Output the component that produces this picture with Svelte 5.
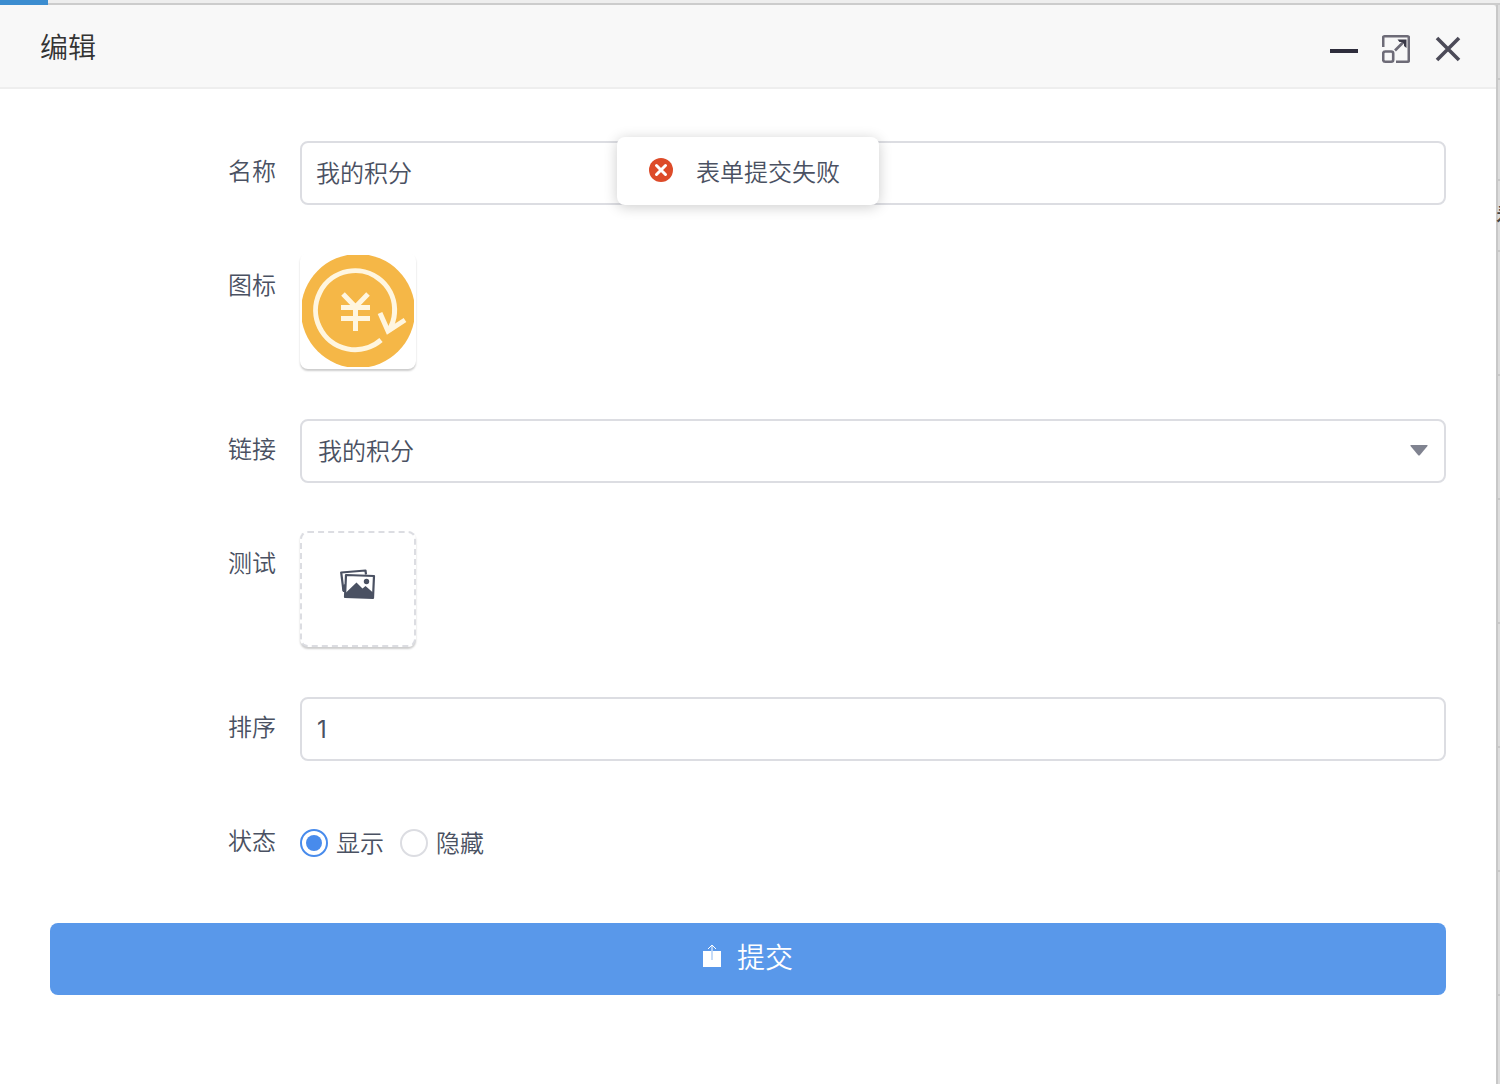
<script lang="ts">
	let name = '我的积分';
	let link = '我的积分';
	let sort = '1';
	let status = 'show';
	let message = '表单提交失败';

	const links = ['我的积分', '我的订单', '我的收藏'];

	// heights of the table rows that show next to the dialog
	const rows = [75, 101, 71, 124, 124, 124, 124, 124, 124];
</script>

<div class="page">
	<div class="tabs"><div class="tab"></div></div>
	<div class="main">
		<div class="dialog" role="dialog" aria-labelledby="title">
			<header>
				<h1 id="title">编辑</h1>
				<div class="tools">
					<button type="button" aria-label="最小化">
						<svg width="28" height="32" viewBox="0 0 28 32">
							<path d="M0 16h28v4H0z" fill="#2e2d3c" />
						</svg>
					</button>
					<button type="button" aria-label="最大化">
						<svg width="28" height="32" viewBox="0 0 28 32" fill="none" stroke="#6d6b77" stroke-width="2.600">
							<path d="M1.200 14V4.500q0-1.300 1.300-1.300h23q1.300 0 1.300 1.300v23q0 1.300-1.300 1.300H14" />
							<rect x="1.200" y="18.500" width="10" height="10.300" rx="2" />
							<path d="M13 17.500l9-9" />
							<path d="M15.500 6.500H24.500V15L22 13V10.500L20 9H17.500z" fill="#3a3947" stroke="none" />
						</svg>
					</button>
					<button type="button" aria-label="关闭">
						<svg width="28" height="32" viewBox="0 0 28 32" fill="none" stroke="#4c4b58" stroke-width="3.600">
							<path d="M3 5l22 22M25 5L3 27" />
						</svg>
					</button>
				</div>
			</header>

			<form on:submit|preventDefault>
				<div class="row">
					<label class="label" for="name">名称</label>
					<input class="control" id="name" type="text" bind:value={name} />
				</div>
				<div class="row">
					<span class="label">图标</span>
					<button class="thumb" type="button" aria-label="图标">
						<svg width="112" height="112" viewBox="0 0 112 112" fill="none">
							<circle cx="56" cy="56" r="57" fill="#f5b747" />
							<g stroke="#fff6e0" stroke-width="5">
								<path d="M79 85A39.500 39.500 0 1 1 92.500 58Q92 67 87 75" />
								<path d="M78 58l8 18 17-11" />
								<path d="M41 39l12.500 13L66 39M53.500 52v24M39 52.500h29M39 63.500h29" />
							</g>
						</svg>
					</button>
				</div>
				<div class="row">
					<label class="label" for="link">链接</label>
					<div class="select">
						<select class="control" id="link" bind:value={link}>
							{#each links as item}
								<option>{item}</option>
							{/each}
						</select>
						<svg class="arrow" width="18" height="11" viewBox="0 0 18 11">
							<path d="M1 0h16q1 0 .5 1L10 10q-1 1-2 0L.5 1Q0 0 1 0z" fill="#808390" />
						</svg>
					</div>
				</div>
				<div class="row">
					<span class="label">测试</span>
					<button class="thumb empty" type="button" aria-label="测试">
						<svg width="36" height="32" viewBox="0 0 36 32" fill="none" stroke="#4a5162" stroke-width="2.200" stroke-linejoin="round">
							<path d="M3.500 23L1.200 4.500l24.300-2 .5 4" />
							<path d="M2 18l3-2v8H3z" fill="#4a5162" stroke="none" />
							<path d="M6 7l28 1-1 22-28-1z" />
							<circle cx="26.500" cy="13.500" r="2.700" fill="#4a5162" stroke="none" />
							<path d="M5.500 25l11-10.500 6 6 3-2.500 8 7v5L6 29z" fill="#4a5162" stroke="none" />
						</svg>
					</button>
				</div>
				<div class="row">
					<label class="label" for="sort">排序</label>
					<input class="control number" id="sort" type="text" bind:value={sort} />
				</div>
				<div class="row" role="radiogroup" aria-labelledby="status">
					<span class="label" id="status">状态</span>
					<div class="radios">
						<label><input type="radio" name="status" value="show" bind:group={status} />显示</label>
						<label><input type="radio" name="status" value="hide" bind:group={status} />隐藏</label>
					</div>
				</div>
				<button class="submit" type="submit">
					<svg width="18" height="24" viewBox="0 0 18 24" fill="none">
						<path d="M0 7h18v16H0z" fill="#fff" />
						<path d="M9 7v9" stroke="#8ab7f1" />
						<path d="M9 7V1M5 5l4-4 4 4" stroke="#fff" />
					</svg>
					提交
				</button>
			</form>

			<div class="toast" role="alert">
				<svg width="24" height="24" viewBox="0 0 24 24">
					<circle cx="12" cy="12" r="12" fill="#dd4b29" />
					<path d="M7.500 7.500l9 9M16.500 7.500l-9 9" stroke="#fff" stroke-width="3" stroke-linecap="round" />
				</svg>
				{message}
			</div>
		</div>

		<div class="behind">
			{#each rows as height, i}
				<div class="cell" style="height: {height}px">{i === 2 ? '看' : ''}</div>
			{/each}
		</div>
	</div>
</div>

<style>
	:global(body) {
		margin: 0;
		background: #ddd;
	}

	.page,
	.page button,
	.page input,
	.page select {
		font-family: 'Noto Sans CJK SC', sans-serif;
		font-size: 24px;
		font-weight: 350;
		color: #4a5162;
	}

	.page {
		box-sizing: border-box;
		display: flex;
		flex-direction: column;
		min-height: 100vh;
	}

	.tabs {
		box-sizing: border-box;
		height: 5px;
		background: #eee;
		border-bottom: 2px solid #ccc;
	}

	.tab {
		width: 48px;
		height: 5px;
		background: #3c8dd0;
	}

	.main {
		flex: 1;
		display: flex;
	}

	.dialog {
		position: relative;
		flex: 1;
		background: #fff;
		border-radius: 0 4px 0 0;
		overflow: hidden;
	}

	header {
		display: flex;
		align-items: center;
		justify-content: space-between;
		height: 82px;
		padding: 0 34px 0 40px;
		background: #f8f8f8;
		border-bottom: 2px solid #eee;
	}

	h1 {
		margin: 0;
		font-size: 28px;
		line-height: 40px;
		font-weight: 350;
		color: #333;
	}

	.tools {
		display: flex;
		gap: 24px;
		padding-top: 6px;
	}

	.tools button {
		display: flex;
		padding: 0;
		border: 0;
		background: none;
	}

	form {
		padding: 52px 50px;
	}

	.row {
		display: flex;
		align-items: flex-start;
		margin-bottom: 50px;
	}

	.label {
		width: 226px;
		margin-right: 24px;
		line-height: 58px;
		text-align: right;
	}

	.control {
		box-sizing: border-box;
		flex: 1;
		width: 100%;
		height: 64px;
		padding: 0 14px 4px;
		background: #fff;
		border: 2px solid #dcdde2;
		border-radius: 8px;
		outline: none;
	}

	.page .number {
		padding: 0 15px;
		font-family: Inter, sans-serif;
		font-weight: 400;
	}

	.select {
		position: relative;
		flex: 1;
	}

	.select .control {
		display: block;
		padding: 0 16px 4px;
		appearance: none;
	}

	.arrow {
		position: absolute;
		top: 26px;
		right: 18px;
		pointer-events: none;
	}

	.thumb {
		box-sizing: border-box;
		display: flex;
		align-items: center;
		justify-content: center;
		width: 116px;
		height: 116px;
		margin-top: -2px;
		padding: 0;
		background: #fff;
		border: 2px solid transparent;
		border-radius: 8px;
		box-shadow: 0 2px 2px rgba(0, 0, 0, 0.2);
	}

	.empty {
		padding-bottom: 10px;
		border: 2px dashed #dcdde2;
	}

	.radios {
		display: flex;
		align-items: flex-start;
		gap: 16px;
		height: 64px;
		line-height: 62px;
	}

	.radios label {
		display: flex;
		align-items: center;
		gap: 8px;
	}

	.radios input {
		box-sizing: border-box;
		width: 28px;
		height: 28px;
		margin: 2px 0 0;
		border: 2px solid #dcdde2;
		border-radius: 50%;
		appearance: none;
	}

	.radios input:checked {
		border-color: #488bec;
		background: #488bec;
		background-clip: content-box;
		padding: 4px;
	}

	.page .submit {
		display: flex;
		align-items: center;
		justify-content: center;
		gap: 16px;
		width: 100%;
		height: 72px;
		margin-top: -2px;
		padding-bottom: 8px;
		font-size: 28px;
		color: #fff;
		background: #5998ea;
		border: 0;
		border-radius: 8px;
	}

	.toast {
		box-sizing: border-box;
		position: absolute;
		top: 132px;
		left: 50%;
		display: flex;
		align-items: center;
		gap: 23px;
		height: 68px;
		padding: 0 39px 2px 32px;
		white-space: nowrap;
		background: #fff;
		border-radius: 8px;
		box-shadow: 0 2px 14px rgba(0, 0, 0, 0.2);
		transform: translateX(-50%);
	}

	.behind {
		width: 4px;
		overflow: hidden;
		background: linear-gradient(to right, #c8c8c8 2px, #ddd 2px);
	}

	.cell {
		box-sizing: border-box;
		line-height: 68px;
		font-weight: 500;
		color: #444;
		border-bottom: 2px solid #c8c8c8;
	}
</style>
